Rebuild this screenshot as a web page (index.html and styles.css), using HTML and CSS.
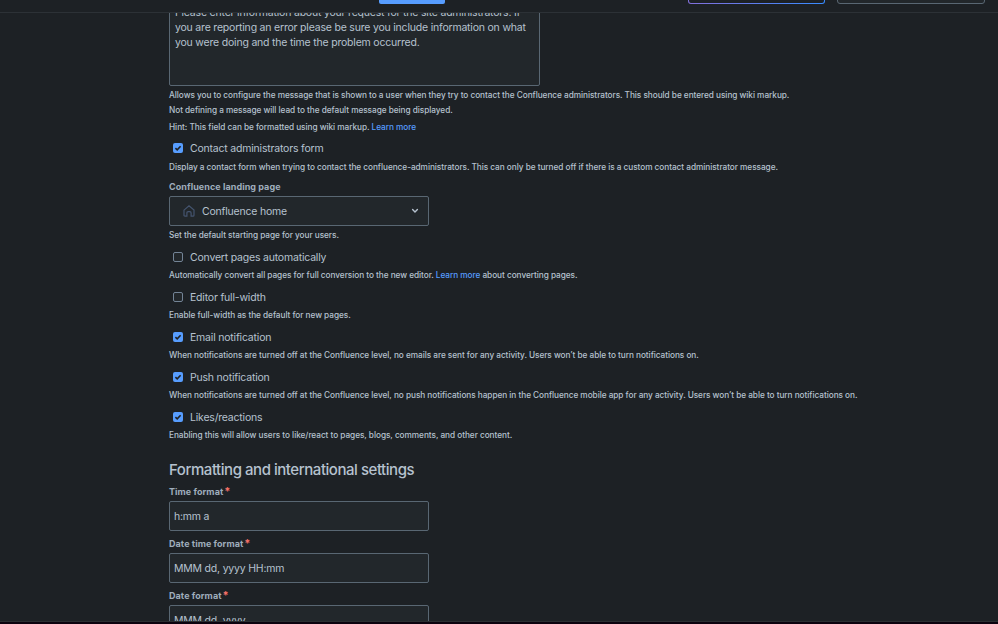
FILE: index.html
```html
<!DOCTYPE html>
<html lang="en">
<head>
  <meta charset="UTF-8" />
  <title>General Configuration</title>
  <meta name="viewport" content="width=device-width, initial-scale=1.0" />
  <link rel="stylesheet" href="styles.css">
</head>
<body>
  <div class="page">
    <header class="topbar">
      <div class="create"></div>
      <div class="trial"></div>
      <div class="search"></div>
    </header>

    <main class="main">
      <form class="settings">
        <div class="textarea">Please enter information about your request for the site administrators. If<br>you are reporting an error please be sure you include information on what<br>you were doing and the time the problem occurred.</div>
        <p class="help message">Allows you to configure the message that is shown to a user when they try to contact the Confluence administrators. This should be entered using wiki markup.<br>Not defining a message will lead to the default message being displayed.</p>
        <p class="help hint">Hint: This field can be formatted using wiki markup. <a href="#">Learn more</a></p>

        <div class="option contact">
          <label class="check"><span class="box checked"><svg viewBox="0 0 10 10"><path d="M2.4 5.2 4.2 6.900 7.600 3.200"/></svg></span>Contact administrators form</label>
          <p class="help">Display a contact form when trying to contact the confluence-administrators. This can only be turned off if there is a custom contact administrator message.</p>
        </div>

        <div class="landing">
          <div class="label">Confluence landing page</div>
          <div class="input select">
            <svg class="home" viewBox="0 0 12 12"><path d="M1 5.1 6 .9l5 4.2v5.1q0 1-1 1H8.100V8q0-1.300-1.300-1.300H5.200Q3.900 6.700 3.900 8v3.200H2q-1 0-1-1z"/></svg>
            <span class="value">Confluence home</span>
            <svg class="chevron" viewBox="0 0 8 6"><path d="M1.600 1.600 4 4l2.400-2.400"/></svg>
          </div>
          <p class="help">Set the default starting page for your users.</p>
        </div>

        <div class="option">
          <label class="check"><span class="box"></span>Convert pages automatically</label>
          <p class="help">Automatically convert all pages for full conversion to the new editor. <a href="#">Learn more</a> about converting pages.</p>
        </div>
        <div class="option">
          <label class="check"><span class="box"></span>Editor full-width</label>
          <p class="help">Enable full-width as the default for new pages.</p>
        </div>
        <div class="option">
          <label class="check"><span class="box checked"><svg viewBox="0 0 10 10"><path d="M2.4 5.2 4.2 6.900 7.600 3.200"/></svg></span>Email notification</label>
          <p class="help">When notifications are turned off at the Confluence level, no emails are sent for any activity. Users won’t be able to turn notifications on.</p>
        </div>
        <div class="option">
          <label class="check"><span class="box checked"><svg viewBox="0 0 10 10"><path d="M2.4 5.2 4.2 6.900 7.600 3.200"/></svg></span>Push notification</label>
          <p class="help">When notifications are turned off at the Confluence level, no push notifications happen in the Confluence mobile app for any activity. Users won’t be able to turn notifications on.</p>
        </div>
        <div class="option">
          <label class="check"><span class="box checked"><svg viewBox="0 0 10 10"><path d="M2.4 5.2 4.2 6.900 7.600 3.200"/></svg></span>Likes/reactions</label>
          <p class="help">Enabling this will allow users to like/react to pages, blogs, comments, and other content.</p>
        </div>

        <h2>Formatting and international settings</h2>
        <div class="field">
          <div class="label">Time format<span class="required">*</span></div>
          <div class="input">h:mm a</div>
        </div>
        <div class="field">
          <div class="label">Date time format<span class="required">*</span></div>
          <div class="input">MMM dd, yyyy HH:mm</div>
        </div>
        <div class="field">
          <div class="label">Date format<span class="required">*</span></div>
          <div class="input">MMM dd, yyyy</div>
        </div>
      </form>
    </main>
    <div class="edge"></div>
  </div>
</body>
</html>
```
FILE: styles.css
```css
* {
  box-sizing: border-box;
}
body {
  margin: 0;
  background: #1d2125;
  color: #b6c2cf;
  font-family: Inter, "Liberation Sans", sans-serif;
  font-size: 10.5px;
  letter-spacing: -0.2px;
}
.page {
  display: flex;
  flex-direction: column;
  height: 624px;
  overflow: hidden;
}

/* top bar */
.topbar {
  display: flex;
  flex: none;
  align-items: flex-end;
  height: 13px;
  padding: 0 13px 8px 379px;
  border-bottom: 1px solid #2c3136;
  overflow: hidden;
}
.create {
  width: 66px;
  height: 24px;
  border-radius: 2px;
  background: #579dff;
}
.trial {
  width: 137px;
  height: 24px;
  margin-left: auto;
  border: 1px solid transparent;
  border-radius: 3px;
  background: linear-gradient(#1d2125, #1d2125) padding-box, linear-gradient(90deg, #8270db, #388bff) border-box;
}
.search {
  width: 148px;
  height: 24px;
  margin-left: 12px;
  border: 1px solid #596773;
  border-radius: 3px;
  background: #22272b;
}

/* settings form */
.main {
  flex: 1;
  min-height: 0;
  overflow: hidden;
}
.settings {
  margin: -13px 0 0 169px;
  white-space: nowrap;
}
.textarea {
  width: 371px;
  height: 86px;
  padding: 4px 5px;
  border: 1px solid #596773;
  border-radius: 2px;
  background: #22272b;
  line-height: 15px;
}
.help {
  margin: 0;
  font-size: 8.25px;
  font-weight: 500;
  line-height: 15px;
  letter-spacing: -0.045px;
}
.message {
  margin-top: 2px;
}
.hint {
  margin: 2px 0 3px;
}
.contact .help {
  padding-top: 1px;
}
a {
  color: #579dff;
  text-decoration: none;
}
.option {
  height: 40px;
}
.check {
  display: flex;
  align-items: center;
  height: 20px;
  margin-bottom: 1px;
  padding-left: 4px;
}
.box {
  width: 10px;
  height: 10px;
  margin-right: 7px;
  border: 1px solid #738496;
  border-radius: 2px;
  background: #22272b;
}
.checked {
  border: 0;
  background: #579dff;
}
.box svg {
  display: block;
  fill: none;
  stroke: #1d2125;
  stroke-width: 1.6;
}
.label {
  height: 16px;
  color: #9fadbc;
  font-size: 9px;
  font-weight: 700;
  line-height: 14px;
  letter-spacing: 0.07px;
}
.required {
  margin-left: 1px;
  color: #f87168;
  font-size: 11px;
  line-height: 1;
}
.input {
  display: flex;
  align-items: center;
  width: 260px;
  height: 30px;
  padding: 0 4px;
  border: 1px solid #596773;
  border-radius: 2px;
  background: #22272b;
}
.landing {
  margin-top: 2px;
  margin-bottom: 4px;
}
.landing .help {
  margin-top: 2px;
}
.select {
  padding: 0 9px 0 13px;
}
.home {
  width: 12px;
  height: 12px;
  margin-right: 7px;
  fill: none;
  stroke: #44546f;
  stroke-width: 1.2;
}
.chevron {
  width: 8px;
  height: 6px;
  margin-left: auto;
  fill: none;
  stroke: #b6c2cf;
  stroke-width: 1.4;
  stroke-linecap: round;
}
h2 {
  height: 25px;
  margin: 10px 0 3px;
  font-size: 15px;
  font-weight: 500;
  line-height: 25px;
  letter-spacing: -0.46px;
}
.field {
  height: 52px;
}

/* window edge */
.edge {
  flex: none;
  height: 3px;
  border-top: 1px solid #2b2f32;
  background: #0b020e;
}
```
